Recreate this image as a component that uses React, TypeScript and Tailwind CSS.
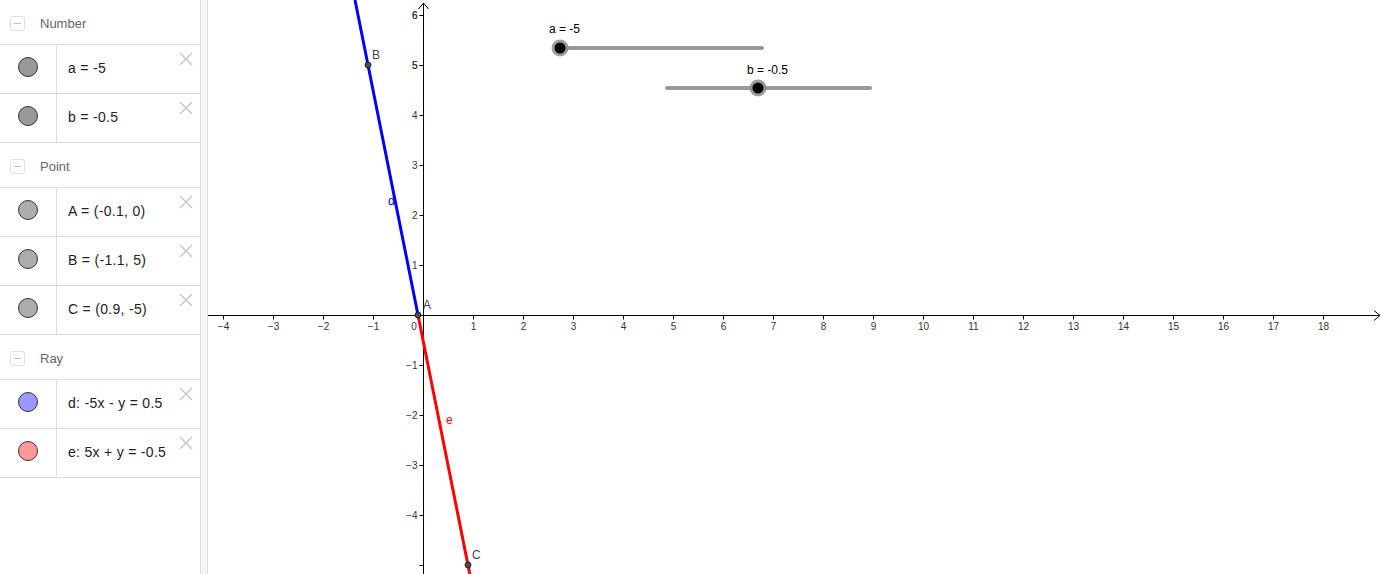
import React from 'react'

type Item = { label: string; fill: string }
type Group = { title: string; items: Item[] }

const groups: Group[] = [
  {
    title: 'Number',
    items: [
      { label: 'a = -5', fill: '#999999' },
      { label: 'b = -0.5', fill: '#999999' },
    ],
  },
  {
    title: 'Point',
    items: [
      { label: 'A = (-0.1, 0)', fill: '#adadad' },
      { label: 'B = (-1.1, 5)', fill: '#adadad' },
      { label: 'C = (0.9, -5)', fill: '#adadad' },
    ],
  },
  {
    title: 'Ray',
    items: [
      { label: 'd: -5x - y = 0.5', fill: '#9999ff' },
      { label: 'e: 5x + y = -0.5', fill: '#ff9999' },
    ],
  },
]

const font = { fontFamily: '"Liberation Sans", Arial, sans-serif' }

// origin of the graphics view, in page pixels
const OX = 423.5
const OY = 315.5
const U = 50

function GroupHeader({ title }: { title: string }) {
  return (
    <div className="h-[45px] border-b border-[#dddddd] flex items-center pt-[3px]">
      <div className="ml-[10px] w-[15px] h-[15px] rounded-[3px] border border-[#e0e0e0] flex items-center justify-center">
        <div className="w-[7px] h-px bg-[#bdbdbd]" />
      </div>
      <span className="ml-[15px] text-[13px] text-[#666666]">{title}</span>
    </div>
  )
}

function ItemRow({ item }: { item: Item }) {
  return (
    <div className="relative h-[49px] border-b border-[#dddddd] flex">
      <div className="w-[57px] border-r border-[#dddddd] flex items-center justify-center pb-[4px]">
        <div className="w-[20px] h-[20px] rounded-full border border-[#333333]" style={{ backgroundColor: item.fill }} />
      </div>
      <div className="flex items-center pl-[11px] pb-[2px] text-[14px] tracking-[0.3px] text-[#222222]">{item.label}</div>
      <svg className="absolute top-[7px] right-[7px]" width="14" height="14" viewBox="0 0 14 14">
        <path d="M1 1 L13 13 M13 1 L1 13" stroke="#c8c8c8" strokeWidth="1.5" />
      </svg>
    </div>
  )
}

function Slider({ x1, x2, y, knob, label, lx, ly }: { x1: number; x2: number; y: number; knob: number; label: string; lx: number; ly: number }) {
  return (
    <g>
      <text x={lx} y={ly} fontSize="12" fill="#000000">{label}</text>
      <line x1={x1} y1={y} x2={x2} y2={y} stroke="#999999" strokeWidth="4" strokeLinecap="round" />
      <circle cx={knob} cy={y} r="8.5" fill="#8c8c8c" opacity="0.85" />
      <circle cx={knob} cy={y} r="5.5" fill="#000000" />
    </g>
  )
}

function Graph() {
  const xs = Array.from({ length: 23 }, (_, i) => i - 4).filter((k) => k !== 0)
  const ys = Array.from({ length: 11 }, (_, i) => i - 4).filter((k) => k !== 0)
  const num = (k: number) => (k < 0 ? `\u2212${-k}` : `${k}`)

  return (
    <svg className="block" width="1174" height="574" viewBox="208 0 1174 574" style={font}>
      {/* axes */}
      <line x1="208" y1={OY} x2="1379" y2={OY} stroke="#000" strokeWidth="1" />
      <polyline points={`1374,${OY - 5} 1380,${OY} 1374,${OY + 5}`} fill="none" stroke="#000" strokeWidth="1" />
      <line x1={OX} y1="574" x2={OX} y2="3" stroke="#000" strokeWidth="1" />
      <polyline points={`${OX - 5},9 ${OX},3 ${OX + 5},9`} fill="none" stroke="#000" strokeWidth="1" />

      {xs.map((k) => (
        <g key={`x${k}`}>
          <line x1={OX + k * U} y1={OY} x2={OX + k * U} y2={OY + 4} stroke="#000" />
          <text x={OX + k * U} y={OY + 14} fontSize="10" textAnchor="middle" fill="#333">{num(k)}</text>
        </g>
      ))}
      <text x={414} y={OY + 14} fontSize="10" textAnchor="middle" fill="#333">0</text>

      {[...ys, 5, 6, -5].map((k) => (
        <g key={`y${k}`}>
          <line x1={OX - 4} y1={OY - k * U} x2={OX} y2={OY - k * U} stroke="#000" />
          {k !== -5 && (
            <text x={OX - 6} y={OY - k * U + 3.5} fontSize="10" textAnchor="end" fill="#333">{num(k)}</text>
          )}
        </g>
      ))}

      {/* rays */}
      <line x1="418" y1="315" x2="355" y2="0" stroke="#0000ff" strokeWidth="3" />
      <line x1="418" y1="315" x2="469.8" y2="574" stroke="#ff0000" strokeWidth="3" />

      {/* points */}
      {[
        [418, 315],
        [368, 65],
        [468, 565],
      ].map(([x, y]) => (
        <circle key={`${x}`} cx={x} cy={y} r="3" fill="#4d4d4d" stroke="#111" strokeWidth="0.8" />
      ))}

      <text x="423" y="309" fontSize="12" fill="#444">A</text>
      <text x="372" y="59" fontSize="12" fill="#444">B</text>
      <text x="472" y="559" fontSize="12" fill="#444">C</text>
      <text x="388" y="205" fontSize="12" fill="#0000ff">d</text>
      <text x="446" y="424" fontSize="12" fill="#ff0000">e</text>

      {/* sliders */}
      <Slider x1={560} x2={762} y={48} knob={560} label="a = -5" lx={549} ly={33} />
      <Slider x1={667} x2={870} y={88} knob={758} label="b = -0.5" lx={747} ly={74} />
    </svg>
  )
}

export default function App() {
  return (
    <div className="flex h-[574px] w-[1382px] overflow-hidden bg-white" style={font}>
      <div className="w-[200px] shrink-0">
        {groups.map((g) => (
          <div key={g.title}>
            <GroupHeader title={g.title} />
            {g.items.map((it) => (
              <ItemRow key={it.label} item={it} />
            ))}
          </div>
        ))}
      </div>
      <div className="w-[8px] shrink-0 bg-[#f5f5f5] border-l border-r border-[#dddddd]" />
      <Graph />
    </div>
  )
}
